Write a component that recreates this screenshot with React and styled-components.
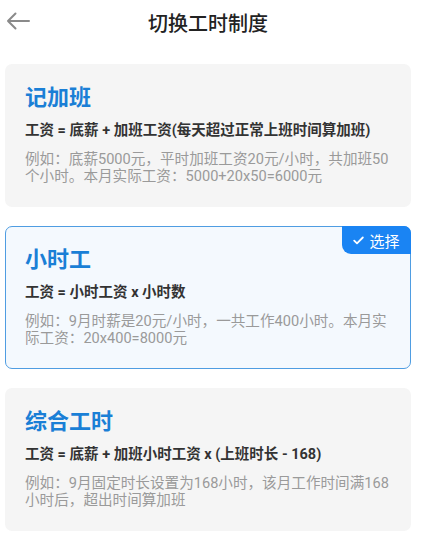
import React, { useState } from 'react';
import styled, { createGlobalStyle } from 'styled-components';

const GlobalStyle = createGlobalStyle`
  body {
    margin: 0;
    background: #ffffff;
    font-family: Roboto, "Noto Sans CJK SC", sans-serif;
  }
`;

const modes = [
  {
    id: 'overtime',
    title: '记加班',
    formula: '工资 = 底薪 + 加班工资(每天超过正常上班时间算加班)',
    example: '例如：底薪5000元，平时加班工资20元/小时，共加班50个小时。本月实际工资：5000+20x50=6000元',
  },
  {
    id: 'hourly',
    title: '小时工',
    formula: '工资 = 小时工资 x 小时数',
    example: '例如：9月时薪是20元/小时，一共工作400小时。本月实际工资：20x400=8000元',
  },
  {
    id: 'combined',
    title: '综合工时',
    formula: '工资 = 底薪 + 加班小时工资 x (上班时长 - 168)',
    example: '例如：9月固定时长设置为168小时，该月工作时间满168小时后，超出时间算加班',
  },
];

const App = () => {
  const [selected, setSelected] = useState('hourly');

  return (
    <Page>
      <GlobalStyle />
      <Header>
        <BackButton aria-label="返回">
          <svg width="24" height="18" viewBox="0 0 24 18" fill="none">
            <path d="M23 9H2M9.5 1.5L2 9l7.5 7.5" stroke="#8a8a8a" strokeWidth="2" strokeLinecap="round" strokeLinejoin="round" />
          </svg>
        </BackButton>
        <Title>切换工时制度</Title>
      </Header>

      <List>
        {modes.map((m) => (
          <Card key={m.id} $active={selected === m.id} onClick={() => setSelected(m.id)}>
            {selected === m.id && (
              <Badge>
                <svg width="11" height="9" viewBox="0 0 11 9" fill="none">
                  <path d="M1.2 4.6L4 7.3 9.8 1.5" stroke="#fff" strokeWidth="1.8" strokeLinecap="round" strokeLinejoin="round" />
                </svg>
                选择
              </Badge>
            )}
            <CardTitle>{m.title}</CardTitle>
            <Formula>{m.formula}</Formula>
            <Example>{m.example}</Example>
          </Card>
        ))}
      </List>
    </Page>
  );
};

export default App;

const Page = styled.div`
  width: 422px;
  min-height: 547px;
`;

const Header = styled.div`
  position: relative;
  height: 44px;
  display: flex;
  align-items: center;
  justify-content: center;
`;

const BackButton = styled.button`
  position: absolute;
  left: 6px;
  top: 12px;
  border: 0;
  padding: 0;
  background: none;
  display: flex;
`;

const Title = styled.h1`
  margin: 0;
  font-size: 20px;
  font-weight: 500;
  color: #222;
  margin-left: -6px;
`;

const List = styled.div`
  display: flex;
  flex-direction: column;
  gap: 19px;
  padding: 20px 11px 0 5px;
`;

const Card = styled.div`
  position: relative;
  box-sizing: border-box;
  height: 143px;
  padding: 18px 12px 0 19px;
  border-radius: 7px;
  border: 1px solid ${(p) => (p.$active ? '#4f9de2' : 'transparent')};
  background: ${(p) => (p.$active ? '#f4f9fe' : '#f5f5f5')};
  cursor: pointer;
`;

const Badge = styled.div`
  position: absolute;
  top: -1px;
  right: -1px;
  height: 28px;
  width: 69px;
  box-sizing: border-box;
  display: flex;
  align-items: center;
  justify-content: center;
  gap: 5px;
  background: #1a84f3;
  color: #fff;
  font-size: 15px;
  border-radius: 0 7px 0 9px;
`;

const CardTitle = styled.div`
  font-size: 22px;
  line-height: 30px;
  font-weight: 700;
  color: #1a7fd6;
`;

const Formula = styled.div`
  margin-top: 7px;
  font-size: 14.5px;
  line-height: 22px;
  font-weight: 700;
  color: #333;
  white-space: nowrap;
`;

const Example = styled.div`
  margin-top: 9px;
  font-size: 14.6px;
  line-height: 17px;
  color: #9a9a9a;
`;
